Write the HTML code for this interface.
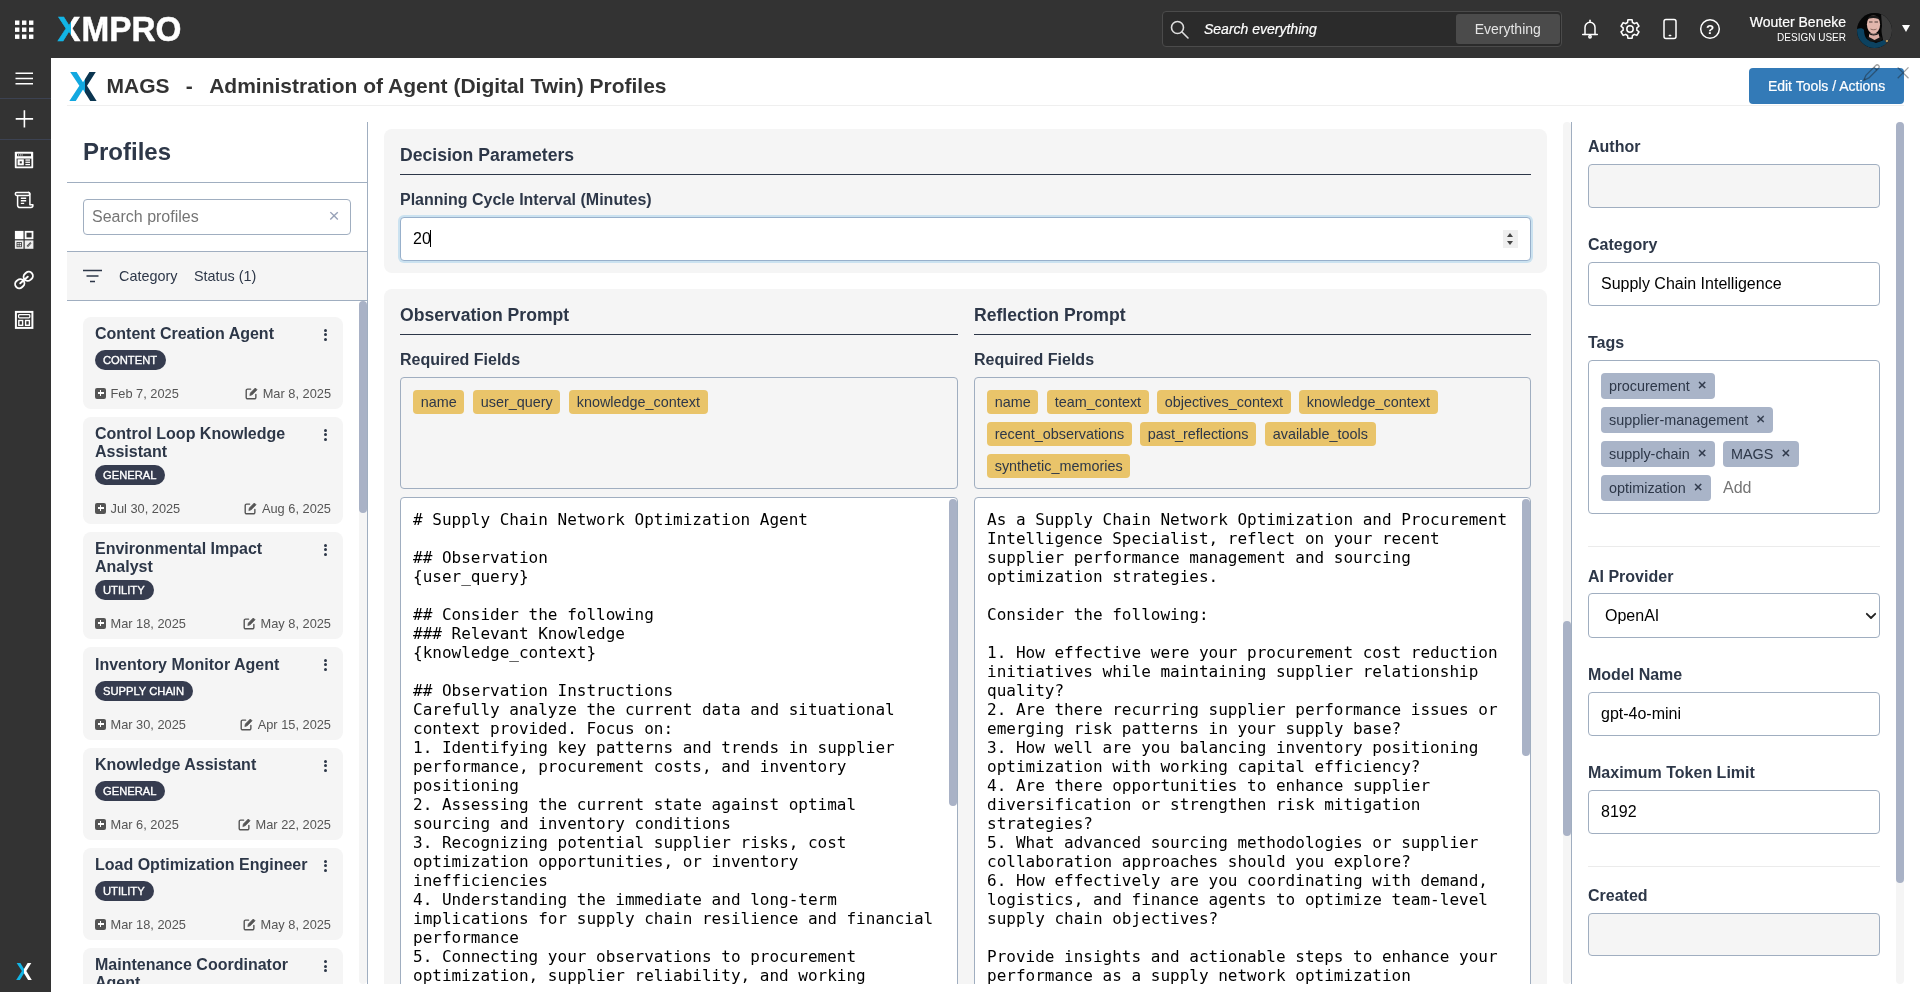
<!DOCTYPE html>
<html lang="en">
<head>
<meta charset="utf-8">
<title>MAGS - Administration of Agent (Digital Twin) Profiles</title>
<style>
*{box-sizing:border-box;margin:0;padding:0}
html,body{width:1920px;height:992px;overflow:hidden;background:#fff}
body{font-family:"Liberation Sans",Arial,Helvetica,sans-serif;color:#2d3748;position:relative;font-size:16px;will-change:transform}
.abs{position:absolute}
svg{display:block}
/* ---------- chrome ---------- */
#topbar{position:absolute;left:0;top:0;width:1920px;height:58px;background:#333}
#sidebar{position:absolute;left:0;top:58px;width:51px;height:934px;background:#333}
.sico{position:absolute;left:0;width:51px;display:flex;justify-content:center}
.sep{position:absolute;left:0;width:51px;height:1px;background:#3c4252}

#topbar .grid{position:absolute;left:15px;top:19.500px}
#topbar .logo{position:absolute;left:56px;top:14px}
#srch{position:absolute;left:1162px;top:11px;width:400px;height:36px;border:1px solid #4b4b4b;border-radius:4px;background:#2b2b2b}
#srch .ph{position:absolute;left:41px;top:0;line-height:34px;font-size:14px;font-style:italic;color:#fff;-webkit-text-stroke:0.200px #fff}
#srch .ev{position:absolute;left:293px;top:2px;width:103.500px;height:30px;border-radius:3px;background:#4b4b4b;color:#e4e4e4;font-size:14px;line-height:30px;text-align:center}
#srch svg{position:absolute;left:5px;top:5px}
.tico{position:absolute;top:17px}
#uname{position:absolute;right:74px;top:13px;font-size:14px;line-height:18px;color:#fff;-webkit-text-stroke:0.200px #fff;text-align:right;white-space:nowrap}
#urole{position:absolute;right:74px;top:31px;font-size:10px;line-height:13px;color:#fff;text-align:right;white-space:nowrap}
#avatar{position:absolute;left:1857px;top:12.500px;width:35px;height:35px;border-radius:50%;overflow:hidden;background:#1c2226}
#caret{position:absolute;left:1902px;top:25px;width:0;height:0;border-left:4px solid transparent;border-right:4px solid transparent;border-top:7px solid #fff}
/* ---------- header ---------- */
#hdr{position:absolute;left:67px;top:58px;width:1837px;height:48px;border-bottom:1px solid #efefef}
#hdr .ttl{position:absolute;left:40px;top:15px;font-weight:bold;font-size:21px;line-height:26px;color:#333;white-space:pre}
#editbtn{position:absolute;left:1749px;top:68px;width:155px;height:36px;background:#337ab7;border-radius:4px;color:#fff;font-size:14px;line-height:36px;text-align:center;-webkit-text-stroke:0.200px #fff}
/* ---------- left ---------- */
#left{position:absolute;left:67px;top:122px;width:301px;height:862px;border-right:1px solid #a0aec0;overflow:hidden}

#left .h{position:absolute;left:16px;top:14px;font-size:24px;font-weight:bold;line-height:32px;color:#2d3748}
.hl{position:absolute;left:0;width:300px;height:1px;background:#a0aec0}
#psearch{position:absolute;left:16px;top:77px;width:268px;height:36px;border:1px solid #a0aec0;border-radius:4px;background:#fff}
#psearch .ph{position:absolute;left:8px;top:0;line-height:34px;font-size:16px;color:#757575}
#psearch .x{position:absolute;right:10.500px;top:0;line-height:32px;font-size:19px;color:#98a2b8}
#filt{position:absolute;left:0;top:130px;width:300px;height:48px;background:#f5f5f5}
#filt span{position:absolute;top:0;line-height:48px;font-size:14.4px;color:#2d3748}
#list{position:absolute;left:0;top:179px;width:300px;height:683px;overflow:hidden}
.card{position:absolute;left:16px;width:260px;background:#f5f5f5;border-radius:8px;padding:8px 12px 0}
.card .t{font-weight:bold;font-size:16px;line-height:18px;min-height:20px;color:#2d3748;padding-right:20px}
.card .kb{position:absolute;right:15.500px;top:12px;width:4px}
.card .kb i{display:block;width:3px;height:3px;border-radius:50%;background:#2d3748;margin-bottom:1.450px}
.card .b{display:inline-block;height:20px;border-radius:10px;background:#363c4f;color:#fff;font-size:11.200px;-webkit-text-stroke:0.350px #fff;line-height:20px;padding:0 9px 0 8px;margin-top:5px;vertical-align:top}
.card .d{position:relative;margin-top:15px;height:18px;font-size:12.800px;line-height:18px;color:#555}
.card .d .l{position:absolute;left:15.500px;top:0}
.card .d .r{position:absolute;right:0;top:0}
.card .d .pi{position:absolute;left:0;top:2.500px;width:11px;height:11px;border-radius:2px;background:#555}
.card .d .pi:before{content:"";position:absolute;left:2.500px;top:4.700px;width:6px;height:1.600px;background:#fff}
.card .d .pi:after{content:"";position:absolute;left:4.700px;top:2.500px;width:1.600px;height:6px;background:#fff}
.card .d svg{display:inline-block;vertical-align:-1.500px;margin-right:4.500px}
.thumb{position:absolute;background:#a9b2c6;border-radius:4px}
/* ---------- center ---------- */
#center{position:absolute;left:368px;top:122px;width:1203px;height:862px;overflow:hidden}

.panel{position:absolute;left:16px;width:1163px;background:#f5f5f5;border-radius:8px}
.ph2{position:absolute;font-weight:bold;font-size:17.600px;line-height:22px;color:#2d3748;white-space:nowrap}
.ul{position:absolute;height:1px;background:#2d3748}
.lbl{position:absolute;font-weight:bold;font-size:16px;line-height:20px;color:#2d3748;white-space:nowrap}
#numin{position:absolute;left:16px;top:88px;width:1131px;height:44px;border:1px solid #98b0cb;border-radius:4px;background:#fff;box-shadow:0 0 0 2px #cbe2f0}
#numin .v{position:absolute;left:12px;top:0;line-height:42px;font-size:16px;color:#000}
#numin .cur{position:absolute;left:28.500px;top:12px;width:1px;height:17px;background:#000}
#numin .sp{position:absolute;left:1102px;top:12px;width:15px;height:18px;background:#efefef}
#numin .sp:before{content:"";position:absolute;left:3.800px;top:3px;border-left:3.900px solid transparent;border-right:3.900px solid transparent;border-bottom:4px solid #444}
#numin .sp:after{content:"";position:absolute;left:3.800px;top:11px;border-left:3.900px solid transparent;border-right:3.900px solid transparent;border-top:4px solid #444}
.fbox{position:absolute;width:558px;height:111.500px;border:1px solid #a0aec0;border-radius:4px}
.chip{position:absolute;height:24px;line-height:24px;padding:0 7.700px;border-radius:4px;background:#e9c46a;color:#2d3748;font-size:14.400px;white-space:nowrap}
.ta{position:absolute;width:558px;height:520px;border:1px solid #a0aec0;border-radius:4px;background:#fff;overflow:hidden}
.ta pre{position:absolute;left:12px;top:12px;font-family:"DejaVu Sans Mono","Liberation Mono",monospace;font-size:16px;line-height:19px;color:#000;white-space:pre}
.ta .thumb{left:548px;top:1px;width:8px}
#ctrack{position:absolute;left:1195px;top:0;width:8px;height:862px;background:#f5f5f5;border-radius:4px}
/* ---------- right ---------- */
#right{position:absolute;left:1571px;top:122px;width:340px;height:862px;border-left:1px solid #a0aec0;overflow:hidden}

#right .lbl{left:16px}
.inp{position:absolute;left:16px;width:292px;height:44px;border:1px solid #a0aec0;border-radius:4px;background:#fff;font-size:16px;line-height:42px;color:#000;padding-left:12px;white-space:nowrap}
.inp.dis{background:#f5f5f5}
.hr{position:absolute;left:16px;width:292px;height:1px;background:#ebebeb}
#tags{position:absolute;left:16px;top:238px;width:292px;height:154px;border:1px solid #a0aec0;border-radius:4px;background:#fff}
.tag{position:absolute;height:25.500px;line-height:26.400px;padding:0 8.500px 0 8px;overflow:hidden;border-radius:4px;background:#a9b4c8;color:#2d3748;font-size:14.400px;white-space:nowrap}
.tag b{font-weight:normal;margin-left:8px;font-size:15px;-webkit-text-stroke:0.300px #2d3748;position:relative;top:-0.800px}
#rtrack{position:absolute;left:324px;top:0;width:8px;height:862px;background:#f5f5f5;border-radius:4px}
.card.two .b{margin-top:4px}
</style>
</head>
<body>
<div id="topbar">
<svg class="grid" width="20" height="20" viewBox="0 0 20 20" fill="#fff"><rect x="0" y="0.5" width="4.4" height="4.4"/><rect x="7" y="0.5" width="4.4" height="4.4"/><rect x="14" y="0.5" width="4.4" height="4.4"/><rect x="0" y="7.5" width="4.4" height="4.4"/><rect x="7" y="7.5" width="4.4" height="4.4"/><rect x="14" y="7.5" width="4.4" height="4.4"/><rect x="0" y="14.5" width="4.4" height="4.4"/><rect x="7" y="14.5" width="4.4" height="4.4"/><rect x="14" y="14.5" width="4.4" height="4.4"/></svg>
<svg class="logo" width="130" height="30" viewBox="0 0 130 30"><defs><linearGradient id="lgx" x1="0" x2="1" y1="0" y2="0"><stop offset="0.56" stop-color="#12b5e6"/><stop offset="0.56" stop-color="#fff"/></linearGradient></defs><text x="1.500" y="27.200" font-family="Liberation Sans, Arial, sans-serif" font-weight="bold" font-size="35" fill="url(#lgx)" stroke="url(#lgx)" stroke-width="0.500" textLength="23" lengthAdjust="spacingAndGlyphs">X</text><text x="25.500" y="27.200" font-family="Liberation Sans, Arial, sans-serif" font-weight="bold" font-size="35" fill="#fff" stroke="#fff" stroke-width="0.500" textLength="100" lengthAdjust="spacingAndGlyphs">MPRO</text></svg>
<div id="srch"><svg width="24" height="24" viewBox="0 0 24 24" fill="none" stroke="#ddd" stroke-width="1.6" stroke-linecap="round"><circle cx="9.5" cy="10.5" r="6"/><path d="M14 15l6 6"/></svg><div class="ph">Search everything</div><div class="ev">Everything</div></div>
<svg class="tico" style="left:1578px" width="24" height="24" viewBox="0 0 24 24" fill="none" stroke="#fff" stroke-width="1.500" stroke-linejoin="round" stroke-linecap="round"><path d="M7 17.500V10.200a5 5 0 0 1 10 0V17.500"/><path d="M4.700 17.500H19.300"/><path d="M12 3.200V5"/><circle cx="12" cy="19.700" r="1.200"/></svg>
<svg class="tico" style="left:1618px" width="24" height="24" viewBox="0 0 24 24" fill="none" stroke="#fff" stroke-width="1.500" stroke-linejoin="round"><circle cx="12" cy="12" r="3.200"/><path d="M9.53 5.56L9.89 2.84L14.11 2.84L14.47 5.56A6.90 6.90 0 0 1 16.34 6.64L18.87 5.59L20.99 9.25L18.82 10.92A6.90 6.90 0 0 1 18.82 13.08L20.99 14.75L18.87 18.41L16.34 17.36A6.90 6.90 0 0 1 14.47 18.44L14.11 21.16L9.89 21.16L9.53 18.44A6.90 6.90 0 0 1 7.66 17.36L5.13 18.41L3.01 14.75L5.18 13.08A6.90 6.90 0 0 1 5.18 10.92L3.01 9.25L5.13 5.59L7.66 6.64A6.90 6.90 0 0 1 9.53 5.56z"/></svg>
<svg class="tico" style="left:1658px" width="24" height="24" viewBox="0 0 24 24" fill="none" stroke="#fff" stroke-width="1.500"><rect x="6" y="2.500" width="12" height="19" rx="2"/><path d="M11.300 18.400h1.400" stroke-linecap="round"/></svg>
<svg class="tico" style="left:1698px" width="24" height="24" viewBox="0 0 24 24" fill="none" stroke="#fff" stroke-width="1.500"><circle cx="12" cy="12" r="9.300"/><text x="12" y="16.800" text-anchor="middle" font-family="Liberation Sans, Arial, sans-serif" font-weight="bold" font-size="13.500" fill="#fff" stroke="none">?</text></svg>
<div id="uname">Wouter Beneke</div><div id="urole">DESIGN USER</div>
<div id="avatar"><svg width="35" height="35" viewBox="0 0 35 35"><rect width="35" height="35" fill="#060606"/><path d="M24 0h11v35h-9c2-8-3-14-1-22z" fill="#3d3d3d"/><path d="M0 16c3-1.500 6-1 7 1c0 4 1 8 4 10l8 3 8-3 3 4v4h-30z" fill="#0c4260"/><g transform="translate(0 -2.500)"><path d="M10 27l4-3h7l5 4-3 3h-10z" fill="#151515"/><path d="M12 23h9.500l1 4-5 2.500-5.500-3z" fill="#dcaea4"/><ellipse cx="16.500" cy="14" rx="6.600" ry="9.300" fill="#e2b6ac"/><path d="M10 10c1-7 12-7 13.500 0c-2-3-12-3.500-13.500 0z" fill="#1a1a1a"/><path d="M11.500 22c3 2.500 8 2.500 10.500-.5l.3 1.500c-3 2.500-8 2.500-10.600.5z" fill="#1c1c1c"/><path d="M12 11.500h3.500M17.500 11.500h3.500" stroke="#4a3a36" stroke-width="1"/><path d="M13.500 18.500c2 1 4.500 1 6 0" stroke="#8a6a60" stroke-width="1" fill="none"/></g><rect x="29" y="27" width="2" height="2" fill="#b8965a"/></svg></div>
<div id="caret"></div>
</div>
<div id="sidebar">
<svg class="abs" style="left:15px;top:14px" width="20" height="14" viewBox="0 0 20 14" stroke="#fff" stroke-width="1.500"><path d="M0.500 1.200h17.500M0.500 6.500h17.500M0.500 11.800h17.500"/></svg>
<div class="sep" style="top:40px"></div>
<svg class="abs" style="left:13px;top:50px" width="22" height="22" viewBox="0 0 22 22" stroke="#fff" stroke-width="1.600"><path d="M11.400 2.300v17.200M2.700 10.900h17.400"/></svg>
<div class="sep" style="top:81px"></div>
<svg class="abs" style="left:13px;top:91px" width="22" height="22" viewBox="0 0 22 22"><rect x="1.800" y="2.700" width="18.400" height="16.500" rx="0.800" fill="#fff"/><rect x="4" y="4.700" width="14" height="2.500" fill="#333"/><rect x="5" y="5.400" width="1" height="1.100" fill="#fff"/><rect x="6.800" y="5.400" width="1" height="1.100" fill="#fff"/><rect x="8.600" y="5.400" width="1" height="1.100" fill="#fff"/><rect x="3.600" y="9.600" width="14.800" height="7.900" fill="#333"/><rect x="4.600" y="10.300" width="6.200" height="6" fill="#fff"/><rect x="6.700" y="12.300" width="2.100" height="2.100" fill="#333"/><rect x="12.400" y="10.400" width="4.600" height="1.300" fill="#fff"/><rect x="12.400" y="12.600" width="4.600" height="1.300" fill="#fff"/><rect x="12.400" y="14.900" width="4.600" height="1.300" fill="#fff"/></svg>
<svg class="abs" style="left:13px;top:131px" width="22" height="22" viewBox="0 0 22 22" fill="none" stroke="#fff" stroke-width="1.500" stroke-linejoin="round"><path d="M4.600 6.500v9.800a2.200 2.200 0 0 0 2.200 2.200h11.200a1.900 1.900 0 0 0 1.900-1.900v-.9h-3v-10.700a1.700 1.700 0 0 0-1.700-1.700"/><rect x="2.300" y="3.600" width="14.400" height="2.800" rx="1.400"/><path d="M7.800 9.200h5.400M7.800 11.800h5.400M7.800 14.400h3.400" stroke-width="1.400"/></svg>
<svg class="abs" style="left:13px;top:171px" width="22" height="22" viewBox="0 0 22 22"><rect x="1.900" y="1.900" width="8.600" height="8.300" fill="#fff"/><rect x="11.700" y="1.900" width="8.700" height="8.300" fill="#fff"/><rect x="13.500" y="3.700" width="5.100" height="4.700" fill="#333"/><rect x="1.900" y="11.400" width="8.600" height="8.400" fill="#f0f0f0"/><rect x="4" y="13.500" width="4.400" height="4.300" fill="none" stroke="#333" stroke-width="0.800"/><path d="M4 15.600h4.400M6.200 13.500v4.300" stroke="#333" stroke-width="0.700"/><rect x="11.700" y="11.400" width="8.700" height="8.400" fill="#f0f0f0"/><path d="M14.200 17.600l3.700-3.900" stroke="#333" stroke-width="1.700"/><path d="M13.700 18.200l4.600-4.900" stroke="#f0f0f0" stroke-width="0.500"/></svg>
<svg class="abs" style="left:13px;top:211px" width="22" height="22" viewBox="0 0 22 22" fill="none" stroke="#fff" stroke-width="1.900" stroke-linecap="round"><g transform="rotate(-41 11 11)"><rect x="0.600" y="6.900" width="9.600" height="8.200" rx="4.100"/><rect x="11.800" y="6.900" width="9.600" height="8.200" rx="4.100"/><path d="M6 11h10"/></g></svg>
<svg class="abs" style="left:13px;top:251px" width="22" height="22" viewBox="0 0 22 22" fill="none" stroke="#fff"><rect x="2.900" y="2.900" width="16.500" height="16" stroke-width="2"/><rect x="5.600" y="5.600" width="11.200" height="3.200" rx="0.800" stroke-width="1.200"/><rect x="5.800" y="11.500" width="3.800" height="4.800" stroke-width="1.400"/><rect x="12.600" y="11.500" width="3.800" height="4.800" stroke-width="1.400"/></svg>
<svg class="abs" style="left:13px;top:902px" width="26" height="22" viewBox="0 0 26 22"><defs><linearGradient id="lgx2" x1="0" x2="1" y1="0" y2="0"><stop offset="0.5" stop-color="#12b5e6"/><stop offset="0.5" stop-color="#fff"/></linearGradient></defs><text x="3" y="20" font-family="Liberation Sans, Arial, sans-serif" font-weight="bold" font-size="23.500" fill="url(#lgx2)" textLength="16" lengthAdjust="spacingAndGlyphs">X</text></svg>
</div>
<div id="hdr"><svg class="abs" style="left:1px;top:10px" width="32" height="36" viewBox="0 0 32 36"><defs><linearGradient id="lgx3" x1="0" x2="1" y1="0" y2="0"><stop offset="0.56" stop-color="#12a8e0"/><stop offset="0.56" stop-color="#0b3550"/></linearGradient></defs><text x="1" y="33" font-family="Liberation Sans, Arial, sans-serif" font-weight="bold" font-size="42" fill="url(#lgx3)" textLength="28" lengthAdjust="spacingAndGlyphs">X</text></svg><div class="ttl" style="left:39.600px">MAGS</div><div class="ttl" style="left:118.800px">-</div><div class="ttl" style="left:142.200px">Administration of Agent (Digital Twin) Profiles</div></div>
<div id="editbtn">Edit Tools / Actions</div>
<svg class="abs" style="left:1862px;top:64px" width="18" height="18" viewBox="0 0 18 18" fill="none" stroke="rgba(30,30,30,0.42)" stroke-width="1.300" stroke-linejoin="round"><g transform="rotate(45 9 9)"><path d="M7 14V0.300a2 2 0 0 1 4 0V14L9 19.300z"/><path d="M7 2.800h4"/><path d="M8.200 17l.8 2.300.8-2.300z" fill="rgba(30,30,30,0.42)" stroke="none"/></g></svg>
<svg class="abs" style="left:1896px;top:66px" width="14" height="14" viewBox="0 0 14 14" stroke="rgba(30,30,30,0.42)" stroke-width="1.300"><path d="M1.700 1.400l10.800 10.800M12.500 1.400l-10.800 10.800"/></svg>
<div id="left">
<div class="h">Profiles</div>
<div class="hl" style="top:60px"></div>
<div id="psearch"><span class="ph">Search profiles</span><span class="x">&#215;</span></div>
<div class="hl" style="top:129px"></div>
<div id="filt"><svg class="abs" style="left:16px;top:17px" width="20" height="14" viewBox="0 0 20 14" stroke="#2d3748" stroke-width="1.300"><path d="M0 1.500h19M3.500 7h12M7 12.500h5"/></svg><span style="left:52px">Category</span><span style="left:127px">Status (1)</span></div>
<div class="hl" style="top:178px"></div>
<div id="list">
<div class="card" style="top:16px;height:92px"><div class="t">Content Creation Agent</div><div class="kb"><i></i><i></i><i></i></div><span class="b">CONTENT</span><div class="d"><span class="pi"></span><span class="l">Feb 7, 2025</span><span class="r"><svg width="13" height="13" viewBox="0 0 14 14" fill="none" stroke="#555" stroke-width="1.500" stroke-linejoin="round" stroke-linecap="round"><path d="M6 2.300h-3.200a1.500 1.500 0 0 0-1.500 1.500v7.400a1.500 1.500 0 0 0 1.500 1.500h7.400a1.500 1.500 0 0 0 1.500-1.500v-3.200"/><path d="M5.300 8.800l.5-2.400 5.300-5.300 1.900 1.900-5.300 5.300z" fill="#555" stroke-width="0.800"/></svg>Mar 8, 2025</span></div></div>
<div class="card two" style="top:116px;height:107px"><div class="t">Control Loop Knowledge Assistant</div><div class="kb"><i></i><i></i><i></i></div><span class="b">GENERAL</span><div class="d"><span class="pi"></span><span class="l">Jul 30, 2025</span><span class="r"><svg width="13" height="13" viewBox="0 0 14 14" fill="none" stroke="#555" stroke-width="1.500" stroke-linejoin="round" stroke-linecap="round"><path d="M6 2.300h-3.200a1.500 1.500 0 0 0-1.500 1.500v7.400a1.500 1.500 0 0 0 1.500 1.500h7.400a1.500 1.500 0 0 0 1.500-1.500v-3.200"/><path d="M5.300 8.800l.5-2.400 5.300-5.300 1.900 1.900-5.300 5.300z" fill="#555" stroke-width="0.800"/></svg>Aug 6, 2025</span></div></div>
<div class="card two" style="top:231px;height:107px"><div class="t">Environmental Impact Analyst</div><div class="kb"><i></i><i></i><i></i></div><span class="b">UTILITY</span><div class="d"><span class="pi"></span><span class="l">Mar 18, 2025</span><span class="r"><svg width="13" height="13" viewBox="0 0 14 14" fill="none" stroke="#555" stroke-width="1.500" stroke-linejoin="round" stroke-linecap="round"><path d="M6 2.300h-3.200a1.500 1.500 0 0 0-1.500 1.500v7.400a1.500 1.500 0 0 0 1.500 1.500h7.400a1.500 1.500 0 0 0 1.500-1.500v-3.200"/><path d="M5.300 8.800l.5-2.400 5.300-5.300 1.900 1.900-5.300 5.300z" fill="#555" stroke-width="0.800"/></svg>May 8, 2025</span></div></div>
<div class="card" style="top:346px;height:93px;padding-top:9px"><div class="t">Inventory Monitor Agent</div><div class="kb"><i></i><i></i><i></i></div><span class="b">SUPPLY CHAIN</span><div class="d"><span class="pi"></span><span class="l">Mar 30, 2025</span><span class="r"><svg width="13" height="13" viewBox="0 0 14 14" fill="none" stroke="#555" stroke-width="1.500" stroke-linejoin="round" stroke-linecap="round"><path d="M6 2.300h-3.200a1.500 1.500 0 0 0-1.500 1.500v7.400a1.500 1.500 0 0 0 1.500 1.500h7.400a1.500 1.500 0 0 0 1.500-1.500v-3.200"/><path d="M5.300 8.800l.5-2.400 5.300-5.300 1.900 1.900-5.300 5.300z" fill="#555" stroke-width="0.800"/></svg>Apr 15, 2025</span></div></div>
<div class="card" style="top:447px;height:92px"><div class="t">Knowledge Assistant</div><div class="kb"><i></i><i></i><i></i></div><span class="b">GENERAL</span><div class="d"><span class="pi"></span><span class="l">Mar 6, 2025</span><span class="r"><svg width="13" height="13" viewBox="0 0 14 14" fill="none" stroke="#555" stroke-width="1.500" stroke-linejoin="round" stroke-linecap="round"><path d="M6 2.300h-3.200a1.500 1.500 0 0 0-1.500 1.500v7.400a1.500 1.500 0 0 0 1.500 1.500h7.400a1.500 1.500 0 0 0 1.500-1.500v-3.200"/><path d="M5.300 8.800l.5-2.400 5.300-5.300 1.900 1.900-5.300 5.300z" fill="#555" stroke-width="0.800"/></svg>Mar 22, 2025</span></div></div>
<div class="card" style="top:547px;height:92px"><div class="t">Load Optimization Engineer</div><div class="kb"><i></i><i></i><i></i></div><span class="b">UTILITY</span><div class="d"><span class="pi"></span><span class="l">Mar 18, 2025</span><span class="r"><svg width="13" height="13" viewBox="0 0 14 14" fill="none" stroke="#555" stroke-width="1.500" stroke-linejoin="round" stroke-linecap="round"><path d="M6 2.300h-3.200a1.500 1.500 0 0 0-1.500 1.500v7.400a1.500 1.500 0 0 0 1.500 1.500h7.400a1.500 1.500 0 0 0 1.500-1.500v-3.200"/><path d="M5.300 8.800l.5-2.400 5.300-5.300 1.900 1.900-5.300 5.300z" fill="#555" stroke-width="0.800"/></svg>May 8, 2025</span></div></div>
<div class="card two" style="top:647.400px;height:107px"><div class="t">Maintenance Coordinator Agent</div><div class="kb"><i></i><i></i><i></i></div><span class="b">MAINTENANCE</span><div class="d"><span class="pi"></span><span class="l">Apr 2, 2025</span><span class="r"><svg width="13" height="13" viewBox="0 0 14 14" fill="none" stroke="#555" stroke-width="1.500" stroke-linejoin="round" stroke-linecap="round"><path d="M6 2.300h-3.200a1.500 1.500 0 0 0-1.500 1.500v7.400a1.500 1.500 0 0 0 1.500 1.500h7.400a1.500 1.500 0 0 0 1.500-1.500v-3.200"/><path d="M5.300 8.800l.5-2.400 5.300-5.300 1.900 1.900-5.300 5.300z" fill="#555" stroke-width="0.800"/></svg>May 8, 2025</span></div></div>
<div class="abs" style="left:292px;top:0;width:7.500px;height:683px;background:#f5f5f5;border-radius:4px"></div><div class="thumb" style="left:292px;top:0;width:7.500px;height:212px"></div>
</div>
</div>
<div id="center">
<div class="panel" style="top:7px;height:144px">
<div class="ph2" style="left:16px;top:15px">Decision Parameters</div>
<div class="ul" style="left:16px;top:45px;width:1131px"></div>
<div class="lbl" style="left:16px;top:61px">Planning Cycle Interval (Minutes)</div>
<div id="numin"><span class="v">20</span><span class="cur"></span><span class="sp"></span></div>
</div>
<div class="panel" style="top:167px;height:720px">
<div class="ph2" style="left:16px;top:15px">Observation Prompt</div>
<div class="ul" style="left:16px;top:45px;width:558px"></div>
<div class="lbl" style="left:16px;top:61px">Required Fields</div>
<div class="fbox" style="left:16px;top:88px"><span class="chip" style="left:12px;top:12px">name</span><span class="chip" style="left:72px;top:12px">user_query</span><span class="chip" style="left:168px;top:12px">knowledge_context</span></div>
<div class="ta" style="left:16px;top:208px"><pre># Supply Chain Network Optimization Agent

## Observation
{user_query}

## Consider the following
### Relevant Knowledge
{knowledge_context}

## Observation Instructions
Carefully analyze the current data and situational
context provided. Focus on:
1. Identifying key patterns and trends in supplier
performance, procurement costs, and inventory
positioning
2. Assessing the current state against optimal
sourcing and inventory conditions
3. Recognizing potential supplier risks, cost
optimization opportunities, or inventory
inefficiencies
4. Understanding the immediate and long-term
implications for supply chain resilience and financial
performance
5. Connecting your observations to procurement
optimization, supplier reliability, and working
capital efficiency</pre><div class="thumb" style="height:307px"></div></div>
<div class="ph2" style="left:590px;top:15px">Reflection Prompt</div>
<div class="ul" style="left:590px;top:45px;width:557px"></div>
<div class="lbl" style="left:590px;top:61px">Required Fields</div>
<div class="fbox" style="left:590px;top:88px;width:557px"><span class="chip" style="left:12px;top:12px">name</span><span class="chip" style="left:72px;top:12px">team_context</span><span class="chip" style="left:182px;top:12px">objectives_context</span><span class="chip" style="left:324px;top:12px">knowledge_context</span><span class="chip" style="left:12px;top:44px">recent_observations</span><span class="chip" style="left:165px;top:44px">past_reflections</span><span class="chip" style="left:290px;top:44px">available_tools</span><span class="chip" style="left:12px;top:76px">synthetic_memories</span></div>
<div class="ta" style="left:590px;top:208px;width:557px"><pre>As a Supply Chain Network Optimization and Procurement
Intelligence Specialist, reflect on your recent
supplier performance management and sourcing
optimization strategies.

Consider the following:

1. How effective were your procurement cost reduction
initiatives while maintaining supplier relationship
quality?
2. Are there recurring supplier performance issues or
emerging risk patterns in your supply base?
3. How well are you balancing inventory positioning
optimization with working capital efficiency?
4. Are there opportunities to enhance supplier
diversification or strengthen risk mitigation
strategies?
5. What advanced sourcing methodologies or supplier
collaboration approaches should you explore?
6. How effectively are you coordinating with demand,
logistics, and finance agents to optimize team-level
supply chain objectives?

Provide insights and actionable steps to enhance your
performance as a supply network optimization
specialist.</pre><div class="thumb" style="left:547px;height:257px"></div></div>
</div>
<div id="ctrack"><div class="thumb" style="left:0;top:499px;width:8px;height:215px"></div></div>
</div>
<div id="right">
<div class="lbl" style="top:14.500px">Author</div>
<div class="inp dis" style="top:42px"></div>
<div class="lbl" style="top:112.500px">Category</div>
<div class="inp" style="top:140px">Supply Chain Intelligence</div>
<div class="lbl" style="top:210.500px">Tags</div>
<div id="tags">
<span class="tag" style="left:12px;top:12px">procurement<b>&#215;</b></span>
<span class="tag" style="left:12px;top:46px">supplier-management<b>&#215;</b></span>
<span class="tag" style="left:12px;top:80px">supply-chain<b>&#215;</b></span>
<span class="tag" style="left:134px;top:80px">MAGS<b>&#215;</b></span>
<span class="tag" style="left:12px;top:114px">optimization<b>&#215;</b></span>
<span class="abs" style="left:134px;top:114px;line-height:25.500px;font-size:16px;color:#757575">Add</span>
</div>
<div class="hr" style="top:424px"></div>
<div class="lbl" style="top:444.500px">AI Provider</div>
<div class="inp" style="top:471px;padding-left:16px;height:44.500px;line-height:43.500px">OpenAI<svg class="abs" style="right:2.500px;top:16.500px" width="12" height="10" viewBox="0 0 12 10" fill="none" stroke="#222" stroke-width="1.800" stroke-linecap="round" stroke-linejoin="round"><path d="M1.800 2.800l4.200 4.200 4.200-4.200"/></svg></div>
<div class="lbl" style="top:543px">Model Name</div>
<div class="inp" style="top:570px">gpt-4o-mini</div>
<div class="lbl" style="top:641px">Maximum Token Limit</div>
<div class="inp" style="top:668px">8192</div>
<div class="hr" style="top:744px"></div>
<div class="lbl" style="top:764px">Created</div>
<div class="inp dis" style="top:791px;height:43px"></div>
<div id="rtrack"><div class="thumb" style="left:0;top:0;width:8px;height:761px"></div></div>
</div>
</body>
</html>
